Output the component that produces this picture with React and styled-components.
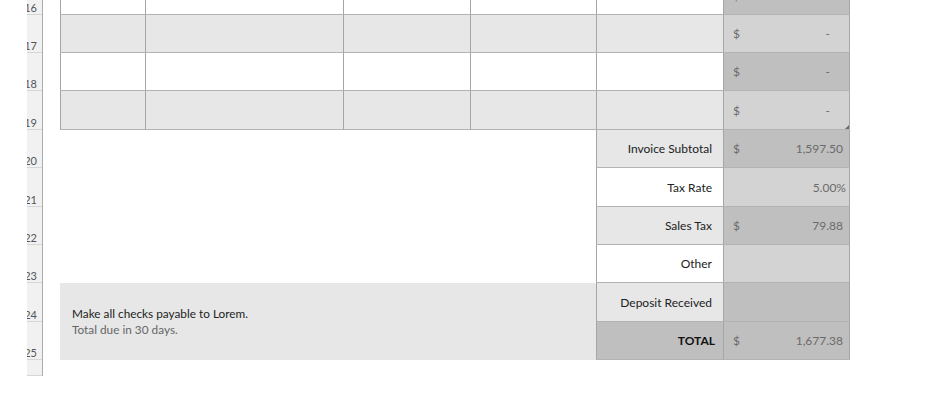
import React from "react";
import styled, { createGlobalStyle } from "styled-components";

const GlobalStyle = createGlobalStyle`
  html, body {
    margin: 0;
    padding: 0;
    background: #ffffff;
  }
  body {
    font-family: Lato, "Noto Sans", "Liberation Sans", sans-serif;
  }
`;

// Excel style row heights, the first row is scrolled partly out of view
const ROW_HEIGHTS = [38, 38, 38, 39, 38, 39, 38, 38, 39, 38];
const ROW_NUMBERS = [16, 17, 18, 19, 20, 21, 22, 23, 24, 25];

const items = ["white", "gray", "white", "gray"];

const totals = [
  { label: "Invoice Subtotal", shade: "gray", value: "1,597.50", dollar: true, dark: true },
  { label: "Tax Rate", shade: "white", value: "5.00%", dark: false, tight: true },
  { label: "Sales Tax", shade: "gray", value: "79.88", dollar: true, dark: true },
  { label: "Other", shade: "white", value: "", dark: false },
  { label: "Deposit Received", shade: "gray", value: "", dark: true },
  { label: "TOTAL", shade: "dark", value: "1,677.38", dollar: true, dark: true, bold: true },
];

const shades = {
  white: "#ffffff",
  gray: "#e7e7e7",
  light: "#d3d3d3",
  dark: "#bfbfbf",
};

const Viewport = styled.div`
  width: 942px;
  height: 406px;
  overflow: hidden;
`;

const Sheet = styled.div`
  display: flex;
  align-items: flex-start;
  padding-left: 27px;
  margin-top: -23px;
`;

const RowHeaders = styled.div`
  display: flex;
  flex-direction: column;
  width: 15px;
  overflow: hidden;
  background: #f1f1f1;
  border-right: 1px solid #ababab;
`;

const RowHeader = styled.div`
  display: flex;
  align-items: flex-end;
  justify-content: flex-end;
  box-sizing: border-box;
  padding: 0 5px 0 0;
  border-bottom: 1px solid #d6d6d6;
  font-size: 11px;
  color: #555;
  white-space: nowrap;
  line-height: 13px;
`;

const Grid = styled.div`
  margin-left: 17px;
  display: grid;
  grid-template-columns: 86px 198px 127px 126px 127px 126px;
  grid-template-rows: ${({ $rows }) => $rows.map((h) => `${h}px`).join(" ")};
`;

const Cell = styled.div`
  position: relative;
  box-sizing: border-box;
  background: ${({ $bg }) => $bg};
  border-right: 1px solid #a6a6a6;
  border-bottom: 1px solid #b3b3b3;
  ${({ $first }) => $first && "border-left: 1px solid #a6a6a6;"}
`;

const LabelCell = styled(Cell)`
  display: flex;
  align-items: center;
  justify-content: flex-end;
  padding-right: ${({ $bold }) => ($bold ? "8px" : "11px")};
  font-size: 12px;
  font-weight: ${({ $bold }) => ($bold ? 700 : 400)};
  color: ${({ $bold }) => ($bold ? "#111" : "#222")};
  border-left: 1px solid #a6a6a6;
  margin-left: -1px;
`;

const ValueCell = styled(Cell)`
  display: flex;
  align-items: center;
  justify-content: space-between;
  padding: 0 ${({ $tight }) => ($tight ? "3px" : "6px")} 0 9px;
  font-size: 12px;
  color: #6b6b6b;
`;

const Dash = styled.span`
  padding-right: 13px;
`;

const Corner = styled.span`
  position: absolute;
  right: 0;
  bottom: 0;
  width: 0;
  height: 0;
  border-left: 4px solid transparent;
  border-bottom: 4px solid #6b6b6b;
`;

const Blank = styled.div`
  grid-column: 1 / 5;
  grid-row: ${({ $row }) => $row};
  background: #ffffff;
`;

const Notes = styled.div`
  grid-column: 1 / 5;
  grid-row: 9 / 11;
  background: #e7e7e7;
  display: flex;
  flex-direction: column;
  justify-content: center;
  padding: 0 12px;
  font-size: 11.8px;
  line-height: 16px;
`;

const NoteLine = styled.div`
  color: ${({ $muted }) => ($muted ? "#666" : "#222")};
`;

const Money = ({ dollar, value }) => (
  <>
    <span>{dollar ? "$" : ""}</span>
    <span>{value}</span>
  </>
);

export default function App() {
  const headerRows = [...ROW_HEIGHTS, 16];
  return (
    <Viewport>
      <GlobalStyle />
      <Sheet>
        <RowHeaders>
          {headerRows.map((h, i) => (
            <RowHeader key={i} style={{ height: h }}>
              {ROW_NUMBERS[i] || ""}
            </RowHeader>
          ))}
        </RowHeaders>
        <Grid $rows={ROW_HEIGHTS}>
          {items.map((shade, r) => (
            <React.Fragment key={`item-${r}`}>
              {[0, 1, 2, 3, 4].map((c) => (
                <Cell key={c} $first={c === 0} $bg={shades[shade]} />
              ))}
              <ValueCell $bg={r % 2 === 0 ? shades.dark : shades.light}>
                <span>$</span>
                <Dash>-</Dash>
                {r === items.length - 1 && <Corner />}
              </ValueCell>
            </React.Fragment>
          ))}
          <Blank $row="5 / 9" />
          <Notes>
            <NoteLine>Make all checks payable to Lorem.</NoteLine>
            <NoteLine $muted>Total due in 30 days.</NoteLine>
          </Notes>
          {totals.map((t, i) => (
            <React.Fragment key={t.label}>
              <LabelCell
                style={{ gridColumn: 5, gridRow: i + 5 }}
                $bg={shades[t.shade]}
                $bold={t.bold}
              >
                {t.label}
              </LabelCell>
              <ValueCell
                style={{ gridColumn: 6, gridRow: i + 5 }}
                $bg={t.dark ? shades.dark : shades.light}
                $tight={t.tight}
              >
                <Money dollar={t.dollar} value={t.value} />
              </ValueCell>
            </React.Fragment>
          ))}
        </Grid>
      </Sheet>
    </Viewport>
  );
}
